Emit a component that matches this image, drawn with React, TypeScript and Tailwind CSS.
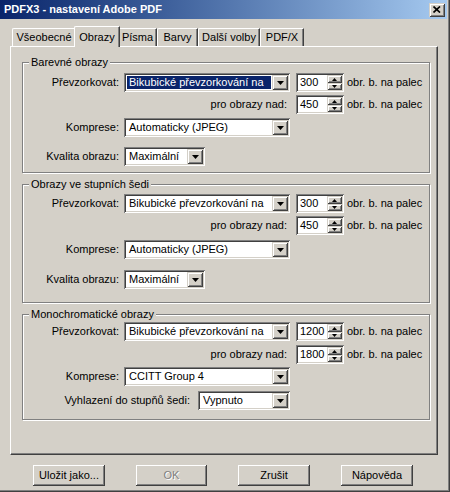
import type { ReactNode } from 'react'

const raised = 'shadow-[inset_-1px_-1px_#404040,inset_1px_1px_#ffffff,inset_-2px_-2px_#808080]'
const raisedInner = 'shadow-[inset_1px_1px_#d4d0c8,inset_-1px_-1px_#404040,inset_2px_2px_#ffffff,inset_-2px_-2px_#808080]'
const sunken = 'shadow-[inset_1px_1px_#808080,inset_-1px_-1px_#ffffff,inset_2px_2px_#404040,inset_-2px_-2px_#d4d0c8]'

function DownArrow() {
  return (
    <svg width="7" height="4" viewBox="0 0 7 4">
      <polygon points="0,0 7,0 3.5,4" fill="#000" />
    </svg>
  )
}

function Combo({ value, className, selected }: { value: string; className: string; selected?: boolean }) {
  return (
    <div className={`flex h-[19px] bg-white p-[2px] ${sunken} ${className}`}>
      <div className="flex-1 min-w-0 py-[1px] pl-[1px] pr-[1px]">
        <div
          className={`h-full pl-[2px] leading-[13px] whitespace-nowrap overflow-hidden ${
            selected ? 'bg-[#0a246a] text-white' : ''
          }`}
        >
          {value}
        </div>
      </div>
      <div className={`w-[16px] h-full flex items-center justify-center bg-[#d4d0c8] ${raisedInner}`}>
        <DownArrow />
      </div>
    </div>
  )
}

function Spin({ value }: { value: string }) {
  return (
    <div className={`flex h-[19px] w-[48px] bg-white p-[2px] ${sunken}`}>
      <div className="flex-1 pl-[2px] leading-[15px]">{value}</div>
      <div className="flex flex-col w-[15px]">
        <div className={`h-[8px] flex items-center justify-center bg-[#d4d0c8] ${raisedInner}`}>
          <svg width="5" height="3" viewBox="0 0 5 3">
            <polygon points="2.5,0 5,3 0,3" fill="#000" />
          </svg>
        </div>
        <div className={`h-[7px] flex items-center justify-center bg-[#d4d0c8] ${raisedInner}`}>
          <svg width="5" height="3" viewBox="0 0 5 3">
            <polygon points="0,0 5,0 2.5,3" fill="#000" />
          </svg>
        </div>
      </div>
    </div>
  )
}

function Group({ title, className, children }: { title: string; className: string; children: ReactNode }) {
  return (
    <div className={`relative border border-[#808080] shadow-[inset_1px_1px_#ffffff,1px_1px_#ffffff] ${className}`}>
      <span className="absolute left-[6px] -top-[7px] bg-[#d4d0c8] px-[2px] leading-[13px]">{title}</span>
      {children}
    </div>
  )
}

function ResampleRows({ dpi, above, gaps }: { dpi: string; above: string; gaps: [string, string] }) {
  return (
    <>
      <div className={`flex items-center h-[19px] ${gaps[0]}`}>
        <span className="w-[96px] text-right">Převzorkovat:</span>
        <Combo className="ml-[5px] w-[166px]" value="Bikubické převzorkování na" selected={dpi === '300' && above === '450' && gaps[0] === 'mt-[10px]'} />
        <div className="ml-[6px]">
          <Spin value={dpi} />
        </div>
        <span className="ml-[3px]">obr. b. na palec</span>
      </div>
      <div className={`flex items-center h-[19px] ${gaps[1]}`}>
        <span className="w-[267px] text-right pr-[3px]">pro obrazy nad:</span>
        <div className="ml-[6px]">
          <Spin value={above} />
        </div>
        <span className="ml-[3px]">obr. b. na palec</span>
      </div>
    </>
  )
}

const tabs = [
  { label: 'Všeobecné', w: 'w-[64px]' },
  { label: 'Obrazy', w: 'w-[46px]', active: true },
  { label: 'Písma', w: 'w-[39px]' },
  { label: 'Barvy', w: 'w-[41px]' },
  { label: 'Další volby', w: 'w-[62px]' },
  { label: 'PDF/X', w: 'w-[44px]' },
]

export default function App() {
  return (
    <div
      className={`relative w-[450px] h-[492px] bg-[#d4d0c8] text-black text-[11px] leading-[13px] font-['Liberation_Sans',Arial,sans-serif] shadow-[inset_-1px_-1px_#404040,inset_-2px_-2px_#808080] select-none`}
    >
      {/* title bar */}
      <div className="mr-[3px] h-[19px] flex items-center bg-linear-to-r from-[#0a246a] to-[#a6caf0]">
        <span className="pl-[4px] font-bold text-white">PDFX3 - nastavení Adobe PDF</span>
        <div className={`ml-auto mr-[2px] w-[16px] h-[14px] flex items-center justify-center bg-[#d4d0c8] ${raisedInner}`}>
          <svg width="8" height="7" viewBox="0 0 8 7">
            <path d="M0.5 0.5 L7 6.5 M7 0.5 L0.5 6.5" stroke="#000" strokeWidth="1.7" />
          </svg>
        </div>
      </div>

      {/* tabs */}
      <div className="mt-[7px] h-[20px] flex items-end pl-[12px]">
        {tabs.map((t) =>
          t.active ? (
            <div
              key={t.label}
              className={`relative z-10 -mx-[2px] -mb-[1px] h-[21px] ${t.w} flex justify-center pt-[4px] bg-[#d4d0c8] border-l border-t border-white rounded-tl-[2px] border-r border-r-[#404040] shadow-[inset_-1px_0_#808080]`}
            >
              {t.label}
            </div>
          ) : (
            <div
              key={t.label}
              className={`h-[18px] ${t.w} flex items-center justify-center bg-[#d4d0c8] border-l border-t border-white rounded-tl-[2px] border-r border-r-[#404040] shadow-[inset_-1px_0_#808080]`}
            >
              {t.label}
            </div>
          )
        )}
      </div>

      {/* panel */}
      <div className="ml-[10px] w-[428px] h-[409px] border border-t-white border-l-white border-r-[#404040] border-b-[#404040] shadow-[inset_-1px_-1px_#808080] pt-[15px] pl-[11px]">
        <Group title="Barevné obrazy" className="w-[408px] h-[111px]">
          <ResampleRows dpi="300" above="450" gaps={['mt-[10px]', 'mt-[3px]']} />
          <div className="flex items-center h-[19px] mt-[4px]">
            <span className="w-[96px] text-right">Komprese:</span>
            <Combo className="ml-[5px] w-[166px]" value="Automaticky (JPEG)" />
          </div>
          <div className="flex items-center h-[19px] mt-[10px]">
            <span className="w-[96px] text-right">Kvalita obrazu:</span>
            <Combo className="ml-[5px] w-[81px]" value="Maximální" />
          </div>
        </Group>

        <Group title="Obrazy ve stupních šedi" className="mt-[11px] w-[408px] h-[119px]">
          <ResampleRows dpi="300" above="450" gaps={['mt-[9px]', 'mt-[3px]']} />
          <div className="flex items-center h-[19px] mt-[5px]">
            <span className="w-[96px] text-right">Komprese:</span>
            <Combo className="ml-[5px] w-[166px]" value="Automaticky (JPEG)" />
          </div>
          <div className="flex items-center h-[19px] mt-[11px]">
            <span className="w-[96px] text-right">Kvalita obrazu:</span>
            <Combo className="ml-[5px] w-[81px]" value="Maximální" />
          </div>
        </Group>

        <Group title="Monochromatické obrazy" className="mt-[11px] w-[408px] h-[106px]">
          <ResampleRows dpi="1200" above="1800" gaps={['mt-[7px]', 'mt-[4px]']} />
          <div className="flex items-center h-[19px] mt-[3px]">
            <span className="w-[96px] text-right">Komprese:</span>
            <Combo className="ml-[5px] w-[166px]" value="CCITT Group 4" />
          </div>
          <div className="flex items-center h-[19px] mt-[5px]">
            <span className="w-[167px] text-right">Vyhlazení do stupňů šedi:</span>
            <Combo className="ml-[8px] w-[92px]" value="Vypnuto" />
          </div>
        </Group>
      </div>

      {/* buttons */}
      <div className="mt-[10px] flex pl-[33px] gap-[31px]">
        <div className={`w-[72px] h-[21px] flex items-center justify-center ${raised}`}>Uložit jako...</div>
        <div className={`w-[71px] h-[21px] flex items-center justify-center text-[#808080] [text-shadow:1px_1px_0_#ffffff] ${raised}`}>
          OK
        </div>
        <div className={`w-[72px] h-[21px] flex items-center justify-center ${raised}`}>Zrušit</div>
        <div className={`w-[72px] h-[21px] flex items-center justify-center ${raised}`}>Nápověda</div>
      </div>
    </div>
  )
}
